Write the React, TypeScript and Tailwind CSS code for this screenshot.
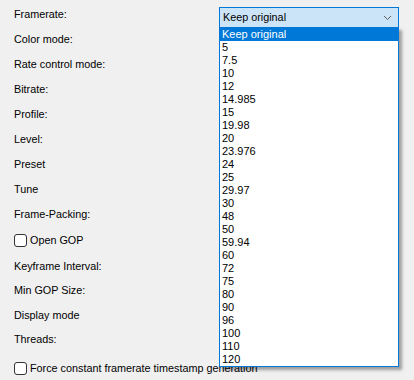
const FRAMERATES = [
  "Keep original",
  "5",
  "7.5",
  "10",
  "12",
  "14.985",
  "15",
  "19.98",
  "20",
  "23.976",
  "24",
  "25",
  "29.97",
  "30",
  "48",
  "50",
  "59.94",
  "60",
  "72",
  "75",
  "80",
  "90",
  "96",
  "100",
  "110",
  "120",
];

const TOP_LABELS = [
  "Color mode:",
  "Rate control mode:",
  "Bitrate:",
  "Profile:",
  "Level:",
  "Preset",
  "Tune",
  "Frame-Packing:",
];

const BOTTOM_LABELS = ["Keyframe Interval:", "Min GOP Size:", "Display mode", "Threads:"];

function Checkbox({ label }: { label: string }) {
  return (
    <div className="flex items-center gap-[3px] whitespace-nowrap">
      <span className="h-[13px] w-[13px] shrink-0 rounded-[3px] border border-[#333333] bg-white" />
      <span>{label}</span>
    </div>
  );
}

export default function App() {
  return (
    <div className="relative h-[380px] w-[414px] overflow-hidden bg-[#f0f0f0] pl-[14px] pt-[2px] font-['Liberation_Sans',sans-serif] text-[10.8px] leading-none text-black">
      {/* framerate row with the combo box */}
      <div className="flex h-[25px] items-start">
        <span className="flex h-[25px] w-[205px] items-center">Framerate:</span>
        <div className="relative mt-[5px] h-[21px] w-[180px]">
          <div className="flex h-full items-center justify-between border border-[#0078d7] bg-[#cce4f7] pl-[3px] pr-[5px]">
            <span>Keep original</span>
            <svg width="9" height="6" viewBox="0 0 9 6" className="mr-[1px]">
              <path d="M1 1 L4.5 4.5 L8 1" fill="none" stroke="#606060" strokeWidth="1" />
            </svg>
          </div>
          {/* open dropdown list */}
          <div className="absolute left-0 top-[20px] z-10 w-[180px] border border-[#0078d7] bg-white text-[11px] shadow-[3px_3px_3px_rgba(0,0,0,0.35)]">
            {FRAMERATES.map((f, i) => (
              <div
                key={f}
                className={
                  i === 0
                    ? "flex h-[13px] items-center bg-[#0078d7] pl-[2px] text-white"
                    : "flex h-[13px] items-center pl-[2px]"
                }
              >
                {f}
              </div>
            ))}
          </div>
        </div>
      </div>

      {TOP_LABELS.map((l) => (
        <div key={l} className="flex h-[25px] items-center">
          {l}
        </div>
      ))}

      <div className="flex h-[27px] items-center">
        <Checkbox label="Open GOP" />
      </div>

      {BOTTOM_LABELS.map((l) => (
        <div key={l} className="flex h-[24.5px] items-center">
          {l}
        </div>
      ))}

      <div className="flex h-[32px] items-center">
        <Checkbox label="Force constant framerate timestamp generation" />
      </div>
    </div>
  );
}
